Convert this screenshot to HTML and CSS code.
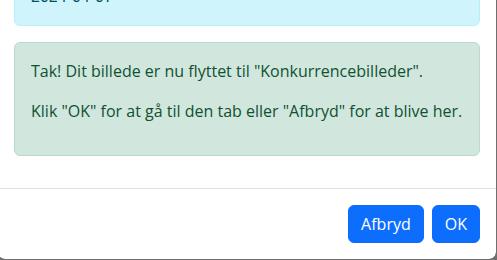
FILE: index.html
```html
<!DOCTYPE html>
<html lang="da">
<head>
  <meta charset="UTF-8">
  <title>Billede flyttet</title>
  <meta name="viewport" content="width=device-width, initial-scale=1.0">
  <link rel="stylesheet" href="styles.css">
</head>
<body>

  <div class="modal-content">
    <div class="modal-body">
      <div class="alert alert-info">
        <p class="date">2024-04-07</p>
      </div>

      <div class="alert alert-success">
        <p>Tak! Dit billede er nu flyttet til "Konkurrencebilleder".</p>
        <p>Klik "OK" for at gå til den tab eller "Afbryd" for at blive her.</p>
      </div>
    </div>

    <div class="modal-footer">
      <button class="btn">Afbryd</button>
      <button class="btn">OK</button>
    </div>
  </div>

</body>
</html>
```

FILE: styles.css
```css
body {
  margin: 0;
  background: #6f6f6f;
  font-family: 'Open Sans', sans-serif;
  font-size: 16px;
  line-height: 24px;
  overflow: hidden;
  height: 260px;
}

.modal-content {
  width: 498px;
  margin-top: -49px;
  margin-left: -3px;
  background: #ffffff;
  background-clip: padding-box;
  border: 1px solid #6f6f6f;
  border-radius: 8px;
}

.modal-body {
  padding: 16px;
}

.alert {
  padding: 16px;
  margin-bottom: 16px;
  border: 1px solid transparent;
  border-radius: 6px;
}

.alert p {
  margin: 0 0 16px;
}

.alert-info {
  color: #055160;
  background: #cff4fc;
  border-color: #b6effb;
}

.alert-info .date {
  margin: 0;
  font-family: 'Liberation Sans', Arial, sans-serif;
}

.alert-success {
  color: #0f5132;
  background: #d1e7dd;
  border-color: #badbcc;
}

.modal-footer {
  display: flex;
  justify-content: flex-end;
  align-items: center;
  padding: 12px;
  border-top: 1px solid #dee2e6;
}

.btn {
  margin: 4px;
  padding: 6px 12px;
  font-family: 'Open Sans', sans-serif;
  font-size: 16px;
  line-height: 24px;
  color: #ffffff;
  background: #0d6efd;
  border: 1px solid #0d6efd;
  border-radius: 6px;
  cursor: pointer;
}
```
